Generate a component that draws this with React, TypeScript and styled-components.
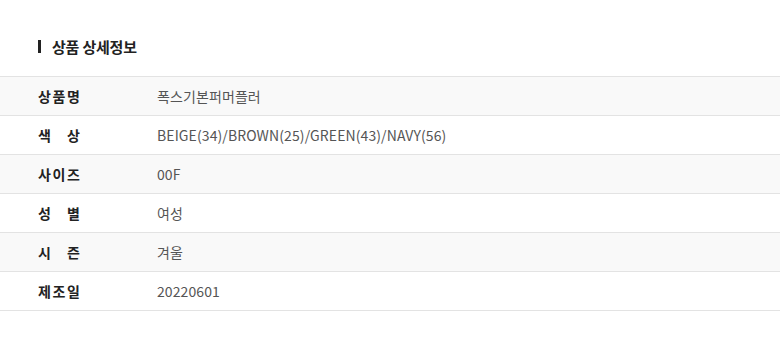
import React from 'react';
import styled, { createGlobalStyle } from 'styled-components';

const GlobalStyle = createGlobalStyle`
  body {
    margin: 0;
    background: #fff;
    font-family: 'Noto Sans CJK KR', 'Noto Sans', sans-serif;
  }
`;

const Wrapper = styled.section`
  width: 780px;
  padding-top: 36px;
`;

const Title = styled.h2`
  display: flex;
  align-items: center;
  gap: 11px;
  margin: 0 0 20px;
  padding-left: 38px;
  height: 20px;
  font-size: 15px;
  font-weight: 700;
  color: #222;
  letter-spacing: -0.2px;

  &::before {
    content: '';
    display: block;
    width: 3px;
    height: 13px;
    background: #222;
  }
`;

const Table = styled.div`
  border-top: 1px solid #e3e3e3;
`;

const Row = styled.div<{ $shaded: boolean }>`
  display: grid;
  grid-template-columns: 119px 1fr;
  align-items: center;
  height: 38px;
  padding-left: 38px;
  border-bottom: 1px solid #e3e3e3;
  background: ${({ $shaded }) => ($shaded ? '#f9f9f9' : '#fff')};
`;

const Label = styled.span`
  display: flex;
  justify-content: space-between;
  width: 42px;
  font-size: 14px;
  font-weight: 700;
  color: #222;
`;

const Value = styled.span`
  font-size: 14px;
  color: #555;
  letter-spacing: 0.1px;
`;

const rows = [
  { label: '상품명', value: '폭스기본퍼머플러' },
  { label: '색상', value: 'BEIGE(34)/BROWN(25)/GREEN(43)/NAVY(56)' },
  { label: '사이즈', value: '00F' },
  { label: '성별', value: '여성' },
  { label: '시즌', value: '겨울' },
  { label: '제조일', value: '20220601' },
];

const App = () => (
  <>
    <GlobalStyle />
    <Wrapper>
      <Title>상품 상세정보</Title>
      <Table>
        {rows.map((row, i) => (
          <Row key={row.label} $shaded={i % 2 === 0}>
            <Label>
              {row.label.split('').map((ch, j) => (
                <span key={j}>{ch}</span>
              ))}
            </Label>
            <Value>{row.value}</Value>
          </Row>
        ))}
      </Table>
    </Wrapper>
  </>
);

export default App;
